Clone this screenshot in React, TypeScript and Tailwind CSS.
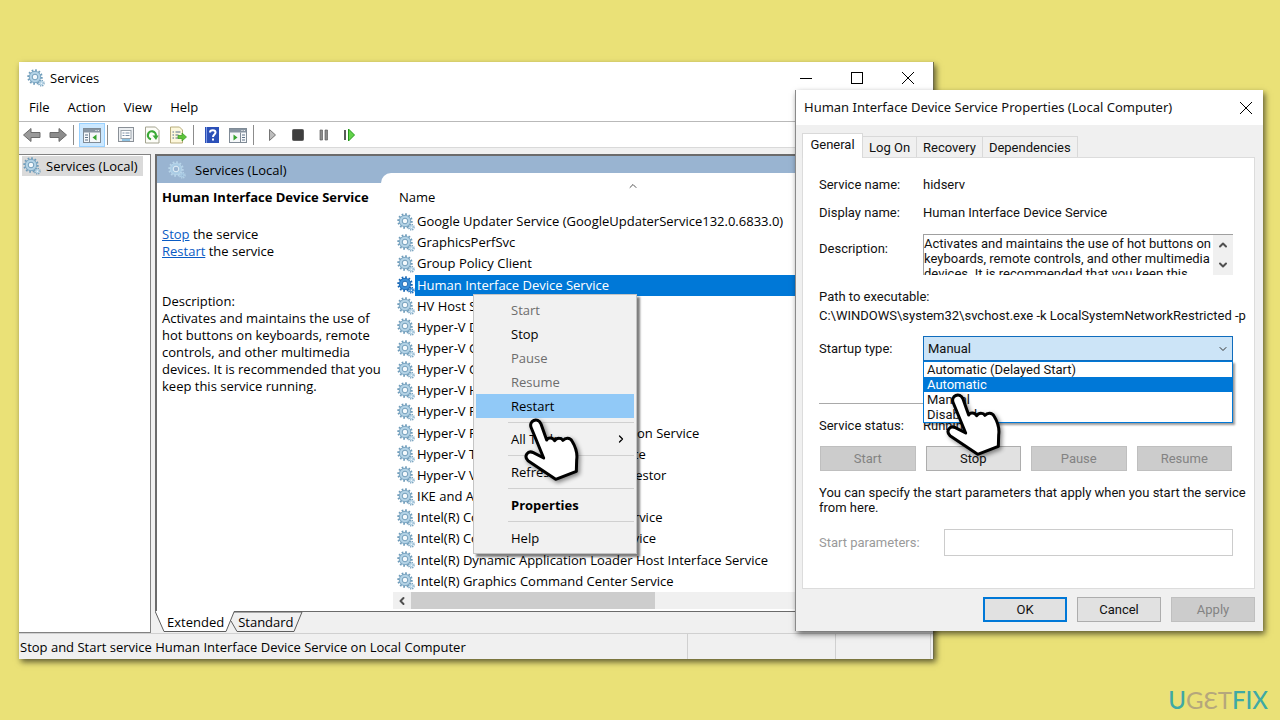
import { useState } from 'react';
import type { ReactNode } from 'react';
import { ChevronDown, ChevronLeft, ChevronRight, ChevronUp } from 'lucide-react';

const SERVICES = [
  'Google Updater Service (GoogleUpdaterService132.0.6833.0)',
  'GraphicsPerfSvc',
  'Group Policy Client',
  'Human Interface Device Service',
  'HV Host Service',
  'Hyper-V Data Exchange Service',
  'Hyper-V Guest Service Interface',
  'Hyper-V Guest Shutdown Service',
  'Hyper-V Heartbeat Service',
  'Hyper-V PowerShell Direct Service',
  'Hyper-V Remote Desktop Virtualization Service',
  'Hyper-V Time Synchronization Service',
  'Hyper-V Volume Shadow Copy Requestor',
  'IKE and AuthIP IPsec Keying Module',
  'Intel(R) Content Protection HDCP Service',
  'Intel(R) Content Protection HECI Service',
  'Intel(R) Dynamic Application Loader Host Interface Service',
  'Intel(R) Graphics Command Center Service',
];

const STARTUP_TYPES = ['Automatic (Delayed Start)', 'Automatic', 'Manual', 'Disabled'];

function GearsIcon({ tone = 'normal' }: { tone?: 'normal' | 'selected' | 'light' }) {
  const stroke = tone === 'selected' ? '#1565b4' : tone === 'light' ? '#b9d6ea' : '#6f9cba';
  const ring = tone === 'selected' ? '#3b8fd8' : tone === 'light' ? '#a9cbe4' : '#b4d3e6';
  const hole = tone === 'light' ? '#99b4d1' : '#f4f9fc';
  return (
    <svg viewBox="0 0 18 18" className="h-[18px] w-[18px] shrink-0" fill="none" aria-hidden="true">
      <circle cx="8" cy="8" r="6.6" stroke={stroke} strokeWidth="2.2" strokeDasharray="1.7 1.75" />
      <circle cx="8" cy="8" r="4.4" stroke={ring} strokeWidth="3" />
      <circle cx="8" cy="8" r="5.7" stroke={stroke} strokeWidth="0.8" />
      <circle cx="8" cy="8" r="2.8" stroke={tone === 'light' ? '#e4f1f9' : stroke} strokeWidth="1" fill={hole} />
      <circle cx="14.4" cy="14.2" r="2.6" stroke={stroke} strokeWidth="1.6" strokeDasharray="1.1 0.94" />
      <circle cx="14.4" cy="14.2" r="1.4" stroke={ring} strokeWidth="1.4" fill={hole} />
    </svg>
  );
}

function HandPointer() {
  return (
    <svg
      viewBox="0 0 270 270"
      className="h-[90px] w-[90px] drop-shadow-[2px_2px_2px_rgba(0,0,0,0.45)]"
      aria-hidden="true"
    >
      <path
        d="M64 84 C54 62 84 50 93 72 L110 120 C114 112 128 112 134 122 C140 112 154 113 159 121 C166 112 180 112 186 123 C197 141 203 160 200 180 L199 214 L137 238 L54 182 C40 168 54 150 70 158 L101 174 Z"
        fill="#fff"
        stroke="#000"
        strokeWidth="9"
        strokeLinejoin="round"
      />
    </svg>
  );
}

function ToolButton({ label, active, children }: { label: string; active?: boolean; children: ReactNode }) {
  return (
    <button
      type="button"
      aria-label={label}
      className={`flex h-6 w-[26px] items-center justify-center ${
        active ? 'border border-[#99d1ff] bg-[#cce8ff]' : ''
      }`}
    >
      <svg viewBox="0 0 18 18" className="h-[18px] w-[18px]" aria-hidden="true">
        {children}
      </svg>
    </button>
  );
}

function Divider() {
  return <span className="ml-[2px] mr-[5px] h-5 w-px bg-[#8c8c8c]" />;
}

function ConsoleShape({ flip }: { flip?: boolean }) {
  return (
    <>
      <rect x="0.5" y="2.5" width="17" height="14" fill="#f6f8fa" stroke="#808b96" />
      <rect x="1" y="3" width="16" height="3.5" fill="#8794a1" />
      <path d="M12.5 4.5h1M14.8 4.5h1" stroke="#fff" />
      <path d={flip ? 'M11.5 6.5v10' : 'M6.5 6.5v10'} stroke="#808b96" />
      <path
        d={flip ? 'M13 9h3M13 11.5h3M13 14h3' : 'M2 9h3M2 11.5h3M2 14h3'}
        stroke="#5d7186"
        strokeWidth="1.2"
      />
      <path d={flip ? 'M4.5 8.5v6l4-3z' : 'M13.5 8.5v6l-4-3z'} fill="#35a32f" />
    </>
  );
}

function Toolbar() {
  return (
    <div className="flex h-[26px] items-center border-t border-[#b9b9b9] bg-white">
      <ToolButton label="Back">
        <path d="M0.5 9 8 2.5v4h9v5H8v4z" fill="#9a9a9a" stroke="#6b6b6b" />
      </ToolButton>
      <ToolButton label="Forward">
        <path d="M17.5 9 10 2.5v4H1v5h9v4z" fill="#8c8c8c" stroke="#6b6b6b" />
      </ToolButton>
      <Divider />
      <ToolButton label="Show console tree" active>
        <ConsoleShape />
      </ToolButton>
      <Divider />
      <ToolButton label="Properties">
        <rect x="1.5" y="1.5" width="15" height="14" fill="#eceff2" stroke="#8a9097" />
        <rect x="4" y="4.5" width="10" height="8" fill="#fff" stroke="#9aa3ab" />
        <path d="M5.5 7h2M5.5 9.5h2M8.5 7h4M8.5 9.5h4" stroke="#7b8fa6" />
        <path d="M5 14h8" stroke="#6fb3dc" strokeWidth="1.5" />
      </ToolButton>
      <ToolButton label="Refresh">
        <path d="M2.5 1h10l3.5 3.5V17h-13.5z" fill="#fdfdf8" stroke="#a3a38f" />
        <path d="M8 13.2a4 4 0 1 1 4.8-3.2" fill="none" stroke="#39a935" strokeWidth="2.2" />
        <path d="M9.5 9.5h6l-2.5 4.5z" fill="#39a935" />
      </ToolButton>
      <ToolButton label="Export list">
        <path d="M1.5 1h9l3 3v13h-12z" fill="#fdf8dc" stroke="#b8ad7c" />
        <path d="M3.5 6h1.5M3.5 9h1.5M3.5 12h1.5M6.5 6h5M6.5 9h3M6.5 12h3" stroke="#55708c" />
        <path d="M9 9.5h4V7l4.5 4-4.5 4v-2.5H9z" fill="#5ec43a" stroke="#369a20" strokeWidth="0.7" />
      </ToolButton>
      <Divider />
      <ToolButton label="Help">
        <rect x="2" y="1" width="14" height="16" fill="#2b50b8" />
        <path d="M3.5 1v16" stroke="#7f9be6" />
        <path d="M7 6.5c0-3 5.5-3 5.5 0 0 2-2.5 2-2.5 4.5M10 12.500v2" stroke="#fff" strokeWidth="2" fill="none" />
      </ToolButton>
      <ToolButton label="Show action pane">
        <ConsoleShape flip />
      </ToolButton>
      <Divider />
      <ToolButton label="Start service">
        <path d="M6.5 3.5v11l6-5.5z" fill="#bdbdbd" stroke="#747474" />
      </ToolButton>
      <ToolButton label="Stop service">
        <rect x="3.5" y="3.5" width="11" height="11" rx="1" fill="#3e3e3e" stroke="#5e5e5e" />
      </ToolButton>
      <ToolButton label="Pause service">
        <path d="M5 4h2.5v10H5zM10 4h2.5v10H10z" fill="#8c8c8c" stroke="#5e5e5e" strokeWidth="0.7" />
      </ToolButton>
      <ToolButton label="Restart service">
        <path d="M3 4h2v10H3z" fill="#5a5a5a" />
        <path d="M7.5 3v12l6-6z" fill="#63d34a" stroke="#239a1a" />
      </ToolButton>
    </div>
  );
}

function SnapInTabs() {
  return (
    <div className="relative flex h-[22px] items-center gap-[14px] border-t border-[#6b6b6b] pl-3">
      <svg viewBox="0 0 150 22" className="absolute -top-px left-0 h-[22px] w-[150px]" aria-hidden="true">
        <path d="M0 0 9 20.5H71L79 0z" fill="#fff" />
        <path d="M0 0 9 20.5H71L79 1H147L139 20.5H82L76 10" fill="none" stroke="#5e5e5e" />
      </svg>
      <button type="button" className="relative">
        Extended
      </button>
      <button type="button" className="relative">
        Standard
      </button>
    </div>
  );
}

function ServicesWindow() {
  return (
    <section
      aria-label="Services"
      className="absolute left-[19px] right-[346px] top-[62px] flex flex-col border-r border-[#6f6d4a] bg-[#f0f0f0] font-['Open_Sans','Noto_Sans',sans-serif] text-[13px] leading-[17px] shadow-[2px_3px_6px_rgba(0,0,0,0.6)]"
    >
      <header className="flex h-8 items-center bg-white pl-2">
        <GearsIcon />
        <h1 className="ml-[5px] grow">Services</h1>
        <button type="button" aria-label="Minimize" className="flex w-[51px] justify-center">
          <svg viewBox="0 0 12 12" className="h-3 w-3"><path d="M0 6.5h12" stroke="#000" /></svg>
        </button>
        <button type="button" aria-label="Maximize" className="flex w-[51px] justify-center">
          <svg viewBox="0 0 12 12" className="h-3 w-3">
            <rect x="0.5" y="0.5" width="11" height="11" fill="none" stroke="#000" />
          </svg>
        </button>
        <button type="button" aria-label="Close" className="flex w-[51px] justify-center">
          <svg viewBox="0 0 12 12" className="h-3 w-3"><path d="M0 0 12 12M12 0 0 12" stroke="#000" /></svg>
        </button>
      </header>
      <nav className="flex h-[27px] items-center gap-[18px] bg-white pl-[10px]">
        <button type="button">File</button>
        <button type="button">Action</button>
        <button type="button">View</button>
        <button type="button">Help</button>
      </nav>
      <Toolbar />

      <div className="flex gap-1 border-t border-[#d9d9d9] pt-[6px]">
        <aside className="w-[132px] shrink-0 border-b border-r border-t border-[#828282] bg-white pl-[3px] pt-px">
          <button type="button" className="flex h-5 items-center gap-[5px] bg-[#dadada] pl-px pr-[5px]">
            <GearsIcon />
            <span className="whitespace-nowrap">Services (Local)</span>
          </button>
        </aside>

        <div className="flex min-w-0 grow flex-col">
          <div className="flex grow flex-col border-l-2 border-t-2 border-[#6b6b6b] bg-white">
            <div className="flex h-[27px] shrink-0 bg-[#99b4d1]">
              <div className="flex w-[224px] shrink-0 items-center gap-[9px] pl-[11px] pt-px">
                <GearsIcon tone="light" />
                <h2>Services (Local)</h2>
              </div>
              <div className="mt-[17px] grow rounded-tl-[10px] bg-white" />
            </div>

            <div className="flex grow">
              <div className="w-[236px] shrink-0 pl-[5px] pt-[6px]">
                <h3 className="whitespace-nowrap font-bold">Human Interface Device Service</h3>
                <p className="mt-5">
                  <a href="#stop" className="text-[#0a5bc4] underline">Stop</a> the service
                </p>
                <p>
                  <a href="#restart" className="text-[#0a5bc4] underline">Restart</a> the service
                </p>
                <p className="mt-[33px]">Description:</p>
                <p className="pr-2">
                  Activates and maintains the use of hot buttons on keyboards, remote controls, and other
                  multimedia devices. It is recommended that you keep this service running.
                </p>
              </div>

              <div className="min-w-0 grow">
                <table className="h-[409px] w-full border-collapse">
                  <thead>
                    <tr className="h-7">
                      <th scope="col" className="relative p-0 pl-[6px] text-left font-normal">
                        Name
                        <ChevronUp strokeWidth={2} className="absolute left-[234px] top-[-3px] h-3 w-3 text-[#555]" />
                      </th>
                    </tr>
                  </thead>
                  <tbody>
                    {SERVICES.map((name, i) => (
                      <tr key={name}>
                        <td className="p-0">
                          <div className="flex items-center pl-1">
                            <GearsIcon tone={i === 3 ? 'selected' : 'normal'} />
                            <span
                              className={`h-[21px] grow whitespace-nowrap pl-[2px] leading-[21px] ${
                                i === 3 ? 'bg-[#0078d7] text-white' : ''
                              }`}
                            >
                              {name}
                            </span>
                          </div>
                        </td>
                      </tr>
                    ))}
                  </tbody>
                </table>
                <div className="mb-[2px] flex h-[17px] bg-[#f0f0f0]">
                  <button type="button" aria-label="Scroll left" className="flex w-[18px] items-center justify-center">
                    <ChevronLeft strokeWidth={4} className="h-3 w-3 text-[#505050]" />
                  </button>
                  <div className="w-[244px] bg-[#cdcdcd]" />
                </div>
              </div>
            </div>
          </div>
          <SnapInTabs />
        </div>
      </div>

      <footer className="flex h-[26px] items-center border-t border-[#d0d0d0] pl-px">
        <p className="grow whitespace-nowrap pt-px">
          Stop and Start service Human Interface Device Service on Local Computer
        </p>
        <span className="h-full w-[148px] border-l border-[#d0d0d0]" />
        <span className="h-full w-[95px] border-l border-[#d0d0d0]" />
        <span className="h-full w-[3px] border-l border-[#d0d0d0]" />
      </footer>
    </section>
  );
}

interface MenuItemProps {
  label: string;
  disabled?: boolean;
  selected?: boolean;
  bold?: boolean;
  submenu?: boolean;
}

function MenuItem({ label, disabled, selected, bold, submenu }: MenuItemProps) {
  return (
    <button
      type="button"
      role="menuitem"
      disabled={disabled}
      className={`flex h-6 items-center justify-between pl-[35px] pr-[7px] text-left ${
        disabled ? 'text-[#6d6d6d]' : ''
      } ${selected ? 'bg-[#91c9f7]' : ''} ${bold ? 'font-bold' : ''}`}
    >
      {label}
      {submenu && <ChevronRight strokeWidth={2.5} className="h-3 w-3" />}
    </button>
  );
}

function MenuSeparator() {
  return (
    <div role="separator" className="flex h-[9px] items-center pl-8">
      <span className="h-px grow bg-[#d0d0d0]" />
    </div>
  );
}

function ContextMenu() {
  return (
    <div
      role="menu"
      className="absolute left-[473px] top-[294px] flex w-[164px] flex-col border border-[#c4c4c4] bg-[#f1f1f1] px-[2px] py-[3px] font-['Open_Sans','Noto_Sans',sans-serif] text-[13px] leading-[17px] shadow-[3px_3px_2px_rgba(0,0,0,0.5)]"
    >
      <MenuItem label="Start" disabled />
      <MenuItem label="Stop" />
      <MenuItem label="Pause" disabled />
      <MenuItem label="Resume" disabled />
      <MenuItem label="Restart" selected />
      <MenuSeparator />
      <MenuItem label="All Tasks" submenu />
      <MenuSeparator />
      <MenuItem label="Refresh" />
      <MenuSeparator />
      <MenuItem label="Properties" bold />
      <MenuSeparator />
      <MenuItem label="Help" />
    </div>
  );
}

function PushButton({ label, disabled, primary }: { label: string; disabled?: boolean; primary?: boolean }) {
  return (
    <button
      type="button"
      disabled={disabled}
      className={`h-[25px] w-full ${
        disabled
          ? 'border border-[#bfbfbf] bg-[#cccccc] text-[#838383]'
          : primary
            ? 'border-2 border-[#0078d7] bg-[#e1e1e1]'
            : 'border border-[#adadad] bg-[#e1e1e1]'
      }`}
    >
      {label}
    </button>
  );
}

function PropertiesDialog() {
  const [startup, setStartup] = useState('Manual');

  return (
    <section
      role="dialog"
      aria-label="Human Interface Device Service Properties (Local Computer)"
      className="absolute left-[795px] right-[17px] top-[90px] border-l border-[#8a8a8a] bg-[#f0f0f0] font-['Roboto','Liberation_Sans',sans-serif] text-[13px] leading-[15px] text-[#111] shadow-[2px_3px_6px_rgba(0,0,0,0.6)]"
    >
      <header className="flex h-[35px] items-center justify-between bg-white pl-2 pr-[11px] font-['Noto_Sans','Open_Sans',sans-serif]">
        <h2 className="whitespace-nowrap">Human Interface Device Service Properties (Local Computer)</h2>
        <button type="button" aria-label="Close">
          <svg viewBox="0 0 12 12" className="h-3 w-3"><path d="M0 0 12 12M12 0 0 12" stroke="#000" /></svg>
        </button>
      </header>

      <div className="pl-[6px] pr-2 pt-2">
        <div role="tablist" className="flex items-end">
          <button
            type="button"
            role="tab"
            aria-selected="true"
            className="-mb-px h-[25px] w-[61px] border border-b-0 border-[#d9d9d9] bg-white pb-[3px]"
          >
            General
          </button>
          {['Log On', 'Recovery', 'Dependencies'].map((tab) => (
            <button
              key={tab}
              type="button"
              role="tab"
              aria-selected="false"
              className="h-[21px] border-r border-t border-[#d9d9d9] px-[6px] first-of-type:px-1"
            >
              {tab}
            </button>
          ))}
        </div>

        <div role="tabpanel" className="border border-[#dcdcdc] bg-white pb-8 pl-4 pr-[21px] pt-[19px]">
          <dl className="grid grid-cols-[104px_1fr] gap-y-[13px]">
            <dt>Service name:</dt>
            <dd>hidserv</dd>
            <dt>Display name:</dt>
            <dd>Human Interface Device Service</dd>
          </dl>

          <div className="mt-[14px] flex">
            <label htmlFor="description" className="w-[104px] shrink-0 pt-[7px]">Description:</label>
            <textarea
              id="description"
              readOnly
              className="h-[41px] min-w-0 grow resize-none overflow-hidden border-l border-t border-[#a0a0a0] pt-px"
              defaultValue={
                'Activates and maintains the use of hot buttons on keyboards, remote controls, and other multimedia devices. It is recommended that you keep this service running.'
              }
            />
            <div className="flex w-5 shrink-0 flex-col justify-between border-t border-[#a0a0a0] bg-[#f0f0f0] py-1">
              <button type="button" aria-label="Scroll up" className="flex justify-center">
                <ChevronUp strokeWidth={4} className="h-3 w-3 text-[#505050]" />
              </button>
              <button type="button" aria-label="Scroll down" className="flex justify-center">
                <ChevronDown strokeWidth={4} className="h-3 w-3 text-[#505050]" />
              </button>
            </div>
          </div>

          <p className="mt-[14px]">Path to executable:</p>
          <p className="mt-1 whitespace-nowrap">
            C:\WINDOWS\system32\svchost.exe -k LocalSystemNetworkRestricted -p
          </p>

          <div className="mt-[13px] flex items-center">
            <label htmlFor="startup" className="w-[104px] shrink-0">Startup type:</label>
            <div className="relative grow">
              <select
                id="startup"
                value={startup}
                onChange={(e) => setStartup(e.target.value)}
                className="block h-[25px] w-full appearance-none border border-[#0f6cbd] bg-[#cce4f7] pl-1"
              >
                {STARTUP_TYPES.map((type) => (
                  <option key={type}>{type}</option>
                ))}
              </select>
              <ChevronDown strokeWidth={2} className="pointer-events-none absolute right-1 top-[7px] h-3 w-3 text-[#333]" />
              <ul
                role="listbox"
                aria-label="Startup type"
                className="absolute inset-x-0 top-full border border-[#0078d7] bg-white shadow-[2px_2px_2px_rgba(0,0,0,0.4)]"
              >
                {STARTUP_TYPES.map((type) => (
                  <li
                    key={type}
                    role="option"
                    aria-selected={type === 'Automatic'}
                    className={`pl-[3px] ${type === 'Automatic' ? 'bg-[#0078d7] text-white' : ''}`}
                  >
                    {type}
                  </li>
                ))}
              </ul>
            </div>
          </div>

          <hr className="mt-[42px] border-[#a9a9a9]" />

          <dl className="mt-[14px] grid grid-cols-[104px_1fr]">
            <dt>Service status:</dt>
            <dd>Running</dd>
          </dl>

          <div className="mt-[13px] grid grid-cols-4 gap-[10px] px-px">
            <PushButton label="Start" disabled />
            <PushButton label="Stop" />
            <PushButton label="Pause" disabled />
            <PushButton label="Resume" disabled />
          </div>

          <p className="-mr-4 mt-[14px]">
            You can specify the start parameters that apply when you start the service from here.
          </p>

          <div className="mt-[14px] flex items-center text-[#9a9a9a]">
            <label htmlFor="params" className="w-[125px] shrink-0">Start parameters:</label>
            <input id="params" disabled className="h-[27px] min-w-0 grow border border-[#cccccc] bg-white px-1" />
          </div>
        </div>
      </div>

      <footer className="flex justify-end gap-[10px] px-2 pb-[9px] pt-2">
        <div className="w-[84px]"><PushButton label="OK" primary /></div>
        <div className="w-[84px]"><PushButton label="Cancel" /></div>
        <div className="w-[84px]"><PushButton label="Apply" disabled /></div>
      </footer>
    </section>
  );
}

function Watermark() {
  return (
    <div
      aria-label="UGETFIX"
      className="absolute bottom-[5px] right-3 flex font-['Lato',sans-serif] text-[24px] leading-[30px] text-[#3fa9a5]"
    >
      <span className="font-medium">U</span>
      <span className="text-[#b5a77c]">GƐT</span>
      <span className="font-medium">FIX</span>
    </div>
  );
}

export default function App() {
  return (
    <main className="relative min-h-screen overflow-hidden bg-[#eae177] text-black">
      <ServicesWindow />
      <ContextMenu />
      <PropertiesDialog />
      <div className="pointer-events-none absolute left-[510px] top-[400px]">
        <HandPointer />
      </div>
      <div className="pointer-events-none absolute left-[932px] top-[375px]">
        <HandPointer />
      </div>
      <Watermark />
    </main>
  );
}
